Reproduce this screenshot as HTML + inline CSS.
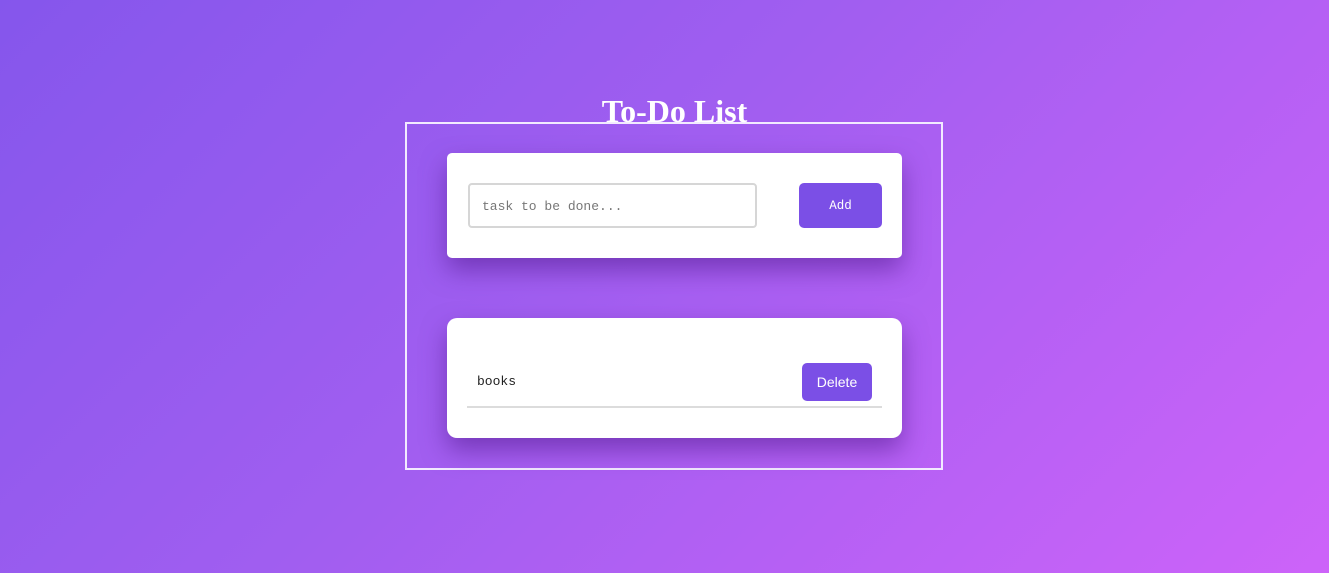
<!DOCTYPE html>
<html><head><style>
html,body{margin:0;padding:0;width:1329px;height:573px;overflow:hidden}
body{background:linear-gradient(135deg,#8556ec 0%,#a15ef0 45%,#cd63f9 100%);position:relative;font-family:"Liberation Sans",sans-serif}
.title{position:absolute;z-index:5;left:10px;width:1329px;top:87px;height:50px;text-align:center;font-family:"Liberation Serif",serif;font-size:32px;font-weight:bold;color:#fff;line-height:48px}
.frame{position:absolute;left:405px;top:122px;width:534px;height:344px;border:2px solid #f2eaff}
.card{position:absolute;background:#fff;box-shadow:0 12px 25px rgba(80,25,140,0.55)}
.c1{left:447px;top:153px;width:455px;height:105px;border-radius:5px}
.c2{left:447px;top:318px;width:455px;height:120px;border-radius:10px}
.inp{position:absolute;left:468px;top:183px;height:41px;border:2px solid #d6d6d6;border-radius:4px;font-family:"Liberation Mono",monospace;font-size:13px;color:#777;line-height:43px;padding-left:12px;width:273px}
.add{position:absolute;left:799px;top:183px;width:83px;height:45px;background:#7b4fe6;border-radius:5px;color:#fff;font-family:"Liberation Mono",monospace;font-size:12.5px;text-align:center;line-height:47px}
.books{position:absolute;left:477px;top:374px;font-family:"Liberation Mono",monospace;font-size:13px;color:#222}
.del{position:absolute;left:802px;top:363px;width:70px;height:38px;background:#7b4fe6;border-radius:5px;color:#fff;font-size:14px;text-align:center;line-height:38px}
.line{position:absolute;left:467px;top:406px;width:415px;height:2px;background:#dcdcdc}
</style></head><body>
<div class="frame"></div>
<div class="card c1"></div>
<div class="inp">task to be done...</div>
<div class="add">Add</div>
<div class="card c2"></div>
<div class="books">books</div>
<div class="del">Delete</div>
<div class="line"></div>
<div class="title">To-Do List</div>
</body></html>
